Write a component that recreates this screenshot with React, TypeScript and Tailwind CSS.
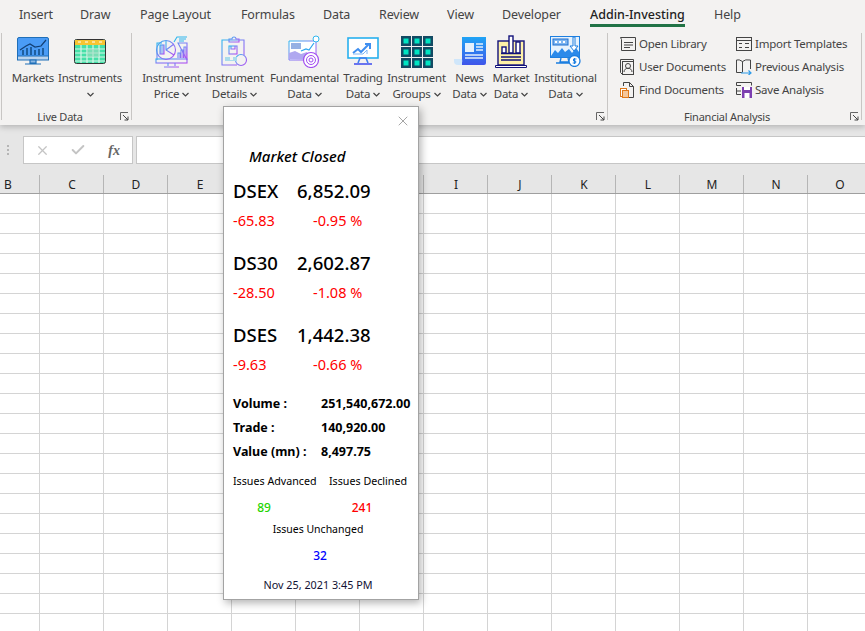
import React from 'react';
import { X, Check } from 'lucide-react';

const tabs = [
    { label: 'Insert', left: 19 },
    { label: 'Draw', left: 80 },
    { label: 'Page Layout', left: 140 },
    { label: 'Formulas', left: 241 },
    { label: 'Data', left: 323 },
    { label: 'Review', left: 379 },
    { label: 'View', left: 447 },
    { label: 'Developer', left: 502 },
    { label: 'Addin-Investing', left: 590, active: true },
    { label: 'Help', left: 714 },
];

const columns = ['B', 'C', 'D', 'E', 'F', 'G', 'H', 'I', 'J', 'K', 'L', 'M', 'N', 'O'];
const rows = Array.from({ length: 22 }, (_, i) => i);

function Chevron() {
    return (
        <svg width="7" height="5" viewBox="0 0 7 5" className="inline-block ml-[3px] mb-[1px]">
            <path d="M0.5 1 L3.5 4 L6.5 1" fill="none" stroke="#444" strokeWidth="1.2" />
        </svg>
    );
}

function Launcher() {
    return (
        <svg width="9" height="9" viewBox="0 0 9 9">
            <path d="M0.5 8V0.5H8" fill="none" stroke="#666" />
            <path d="M3 3L8 8M8 4.5V8H4.5" fill="none" stroke="#444" />
        </svg>
    );
}

function Grad({ id }: { id: string }) {
    return (
        <defs>
            <linearGradient id={id} x1="0" y1="0" x2="1" y2="1">
                <stop offset="0" stopColor="#2fb6ee" />
                <stop offset="0.5" stopColor="#7d7cf5" />
                <stop offset="1" stopColor="#b04df0" />
            </linearGradient>
        </defs>
    );
}

function MarketsIcon() {
    return (
        <svg width="32" height="29" viewBox="0 0 32 29">
            <rect x="0.5" y="0.5" width="31" height="22" rx="1.5" fill="#4a9cf6" stroke="#1f6fb8" />
            <rect x="0.5" y="19" width="31" height="4" fill="#b9d3ee" stroke="#1f6fb8" />
            <path d="M3 13L9 9L13 7L18 10L24 9L29 3" fill="none" stroke="#123f73" strokeWidth="1.2" />
            <path d="M6 18v-5M10 18v-7M14 18v-8M18 18v-5M22 18v-6M26 18v-7" stroke="#1f5f9f" strokeWidth="2" />
            <path d="M13 23h6v3h-6zM8 27h16" fill="#8bb8e4" stroke="#1f6fb8" strokeWidth="1.2" />
        </svg>
    );
}

function InstrumentsIcon() {
    return (
        <svg width="32" height="25" viewBox="0 0 32 25">
            <rect x="0.5" y="0.5" width="31" height="24" rx="2" fill="#45e0a8" stroke="#333" />
            <rect x="1" y="1" width="30" height="5" fill="#f7c532" />
            <path d="M4 3h3M11 3h3M18 3h3M25 3h3" stroke="#fff" />
            <path d="M1 10h30M1 14h30M1 18h30M1 22h30M7 6v18M13 6v18M19 6v18M25 6v18" stroke="#d7f5e8" strokeWidth="1.2" />
            <rect x="13" y="10" width="12" height="8" fill="#9fdcc0" opacity="0.6" />
        </svg>
    );
}

function PriceIcon() {
    return (
        <svg width="33" height="33" viewBox="0 0 33 33" fill="none">
            <Grad id="gp" />
            <g stroke="url(#gp)" strokeWidth="1.1">
                <path d="M2 25V8h5M23 8h9v17z" />
                <rect x="1" y="24" width="31" height="4" />
                <path d="M13 28v3M20 28v3M9 32h15" />
                <circle cx="11" cy="15" r="9.5" />
                <path d="M11 6v9l8 5M11 15l8-6" />
                <rect x="5" y="10" width="4" height="9" fill="#a9c4f2" />
                <path d="M23 23v-5h2v5M26 23v-8h2v8M29 23V12h2v11" />
                <path d="M19 7l3-5h10M24 4h7M24 6h5" stroke="#2fb6ee" />
            </g>
        </svg>
    );
}

function DetailsIcon() {
    return (
        <svg width="27" height="31" viewBox="0 0 27 31" fill="none">
            <Grad id="gd" />
            <g stroke="url(#gd)" strokeWidth="1.1">
                <path d="M16 29H1V4h22v15" />
                <path d="M8 6V3h3a2 2 0 0 1 4 0h3v3z" />
                <rect x="8" y="10" width="8" height="8" />
                <path d="M10 10v3h4v-3" />
                <circle cx="20" cy="24" r="5.5" />
                <path d="M20 21v1M20 23.5v4" />
            </g>
            <path d="M4 21h5v3h3v-3h4v4H4z" fill="#a9dcec" />
        </svg>
    );
}

function FundamentalIcon() {
    return (
        <svg width="33" height="33" viewBox="0 0 33 33" fill="none">
            <Grad id="gf" />
            <path d="M1 6h27v19H1z" fill="#fff" stroke="url(#gf)" />
            <path d="M1 24V18l6-2 6 3 6-2 2 8z" fill="#b0a8f0" />
            <path d="M3 9h10M3 11h10M3 13h10" stroke="#2d63c8" />
            <path d="M13 16l5-2 3 1 5-7" stroke="#2fa6ee" strokeWidth="1.2" />
            <circle cx="28" cy="4" r="3" fill="#fff" stroke="#2fb6ee" />
            <circle cx="23" cy="25" r="7.5" fill="#fff" stroke="#a14df0" strokeWidth="1.2" />
            <circle cx="23" cy="25" r="4.5" stroke="#a14df0" />
            <circle cx="23" cy="25" r="2" stroke="#a14df0" />
        </svg>
    );
}

function TradingIcon() {
    return (
        <svg width="32" height="29" viewBox="0 0 32 29" fill="none">
            <rect x="1" y="1" width="30" height="20" fill="#fff" stroke="#27b0ee" strokeWidth="1.6" />
            <path d="M6 16l5-4 3 3 8-8" stroke="#3f8ff0" strokeWidth="2" />
            <path d="M18 7h5v5" stroke="#3f8ff0" strokeWidth="2" />
            <path d="M6 17h10l4-4v4" stroke="#7fb6f5" strokeWidth="1" />
            <path d="M11 26l2-5h6l2 5" stroke="#3f7ff0" strokeWidth="1.6" />
            <path d="M7 27h18" stroke="#5a66f0" strokeWidth="1.8" />
        </svg>
    );
}

function GroupsIcon() {
    const cells = [0, 11, 22];
    return (
        <svg width="32" height="32" viewBox="0 0 32 32">
            {cells.map(y =>
                cells.map(x => (
                    <g key={`${x}-${y}`}>
                        <rect x={x} y={y} width="10" height="10" fill="#134a63" />
                        <rect x={x + 2.5} y={y + 2.5} width="5" height="5" fill="#00e6c3" />
                    </g>
                ))
            )}
        </svg>
    );
}

function NewsIcon() {
    return (
        <svg width="32" height="29" viewBox="0 0 32 29">
            <defs>
                <linearGradient id="gn" x1="0" y1="0" x2="0" y2="1">
                    <stop offset="0" stopColor="#1fa4f5" />
                    <stop offset="1" stopColor="#3f55ea" />
                </linearGradient>
            </defs>
            <path d="M8 0H32V26Q32 28 30 28H6Q9 27 8 22z" fill="url(#gn)" />
            <path d="M0 22H8V28H4Q0 28 0 24z" fill="#cfe6fa" />
            <rect x="11" y="6" width="9" height="9" fill="#e4f0fc" />
            <path d="M22 7h7M22 10h7M22 13h7M11 18h18M11 21h18" stroke="#e4f0fc" strokeWidth="1.3" />
        </svg>
    );
}

function MarketDataIcon() {
    return (
        <svg width="32" height="33" viewBox="0 0 32 33" fill="none">
            <rect x="3" y="6" width="26" height="24" fill="#fff2a8" stroke="#12127a" strokeWidth="1.4" />
            <rect x="7" y="12" width="4" height="6" fill="#fff" stroke="#12127a" strokeWidth="1.4" />
            <rect x="14" y="1" width="4" height="17" fill="#fff" stroke="#12127a" strokeWidth="1.4" />
            <rect x="21" y="7" width="4" height="11" fill="#fff" stroke="#12127a" strokeWidth="1.4" />
            <path d="M6 18.5h20M6 22h20M6 25h20" stroke="#12127a" strokeWidth="1.3" />
            <path d="M0.5 30.5h31v2h-31z" fill="#fff" stroke="#12127a" />
        </svg>
    );
}

function InstitutionalIcon() {
    return (
        <svg width="31" height="31" viewBox="0 0 31 31" fill="none">
            <rect x="0.5" y="0.5" width="29" height="21" fill="#e6f2fd" stroke="#1d7fe0" />
            <rect x="3" y="3" width="15" height="6" fill="#7fb6f0" stroke="#1d6fd0" />
            <path d="M6 5v2M10 5v2M14 5v2" stroke="#fff" strokeWidth="2" />
            <path d="M1 20l4-6 3 3 4-5 3 4 4-3 3 4 4-5 3 4v5H1z" fill="#2b8aea" />
            <path d="M23 1v9h-3l4 5 4-5h-3V1z" fill="#fff" stroke="#1d7fe0" />
            <path d="M11 22l-1 4h9l-1-4M6 27h15" stroke="#1d7fe0" strokeWidth="1.4" />
            <circle cx="24.5" cy="25" r="5.5" fill="#fff" stroke="#1d7fe0" strokeWidth="1.3" />
            <path d="M26.5 23h-3v2h2.2v2h-3M24.5 22v6" stroke="#1d7fe0" />
        </svg>
    );
}

function OpenLibraryIcon() {
    return (
        <svg width="16" height="14" viewBox="0 0 16 14" fill="none" stroke="#444">
            <path d="M0.5 0.5H15.5M0.5 0.5L1.5 2.5M1.5 2.5V13.5H15.5V0.5" />
            <path d="M4 5.5h9M4 8h9M4 10.5h6" />
        </svg>
    );
}

function UserDocsIcon() {
    return (
        <svg width="14" height="16" viewBox="0 0 14 16" fill="none" stroke="#444">
            <path d="M0.5 0.5H13.5V15.5H2.5L0.5 13.5z" />
            <rect x="2.5" y="2.5" width="11" height="13" />
            <circle cx="8" cy="7" r="2.5" />
            <path d="M4 13c0-5 8-5 8 0" />
        </svg>
    );
}

function FindDocsIcon() {
    return (
        <svg width="14" height="16" viewBox="0 0 14 16" fill="none">
            <path d="M3.5 4V0.5H9.5L13.5 4.5V15.5H9M9.5 0.5V4.5H13.5" stroke="#444" />
            <rect x="0.5" y="6.5" width="6" height="8" fill="#fff" stroke="#e0791a" />
            <rect x="2.5" y="8.5" width="6" height="7" fill="#f6c79a" stroke="#e0791a" />
        </svg>
    );
}

function ImportIcon() {
    return (
        <svg width="16" height="14" viewBox="0 0 16 14" fill="none" stroke="#444">
            <rect x="0.5" y="0.5" width="15" height="13" />
            <path d="M0.5 3.5H15.5M3 6.5h3M9 6.5h4M3 10.5h3M9 10.5h4" />
        </svg>
    );
}

function PreviousIcon() {
    return (
        <svg width="16" height="16" viewBox="0 0 16 16" fill="none">
            <path d="M6.5 2.5Q3 0 0.5 1V13.5H6.5M6.5 2.5V13M6.5 2.5Q9 0 14.5 1V10" stroke="#444" />
            <path d="M5 14h10M12.5 11.5L15 14L12.5 16" stroke="#2d9bea" strokeWidth="1.2" />
        </svg>
    );
}

function SaveIcon() {
    return (
        <svg width="16" height="16" viewBox="0 0 16 16" fill="none">
            <path d="M0.5 3.5V0.5H15.5V3.5M0.5 3.5H5M0.5 6V12.5H5M0.5 9H5" stroke="#444" />
            <rect x="6" y="5" width="10" height="11" fill="#7d3fb0" />
            <rect x="8" y="5" width="6" height="3" fill="#fff" />
            <rect x="8.5" y="11" width="5" height="5" fill="#fff" />
        </svg>
    );
}

const liveButtons = [
    { icon: <MarketsIcon />, top: 'Markets', width: 52, chevronOnly: false },
    { icon: <InstrumentsIcon />, top: 'Instruments', width: 62, chevronOnly: true },
];

const dataButtons = [
    { icon: <PriceIcon />, top: 'Instrument', bottom: 'Price', width: 63 },
    { icon: <DetailsIcon />, top: 'Instrument', bottom: 'Details', width: 63 },
    { icon: <FundamentalIcon />, top: 'Fundamental', bottom: 'Data', width: 77 },
    { icon: <TradingIcon />, top: 'Trading', bottom: 'Data', width: 40 },
    { icon: <GroupsIcon />, top: 'Instrument', bottom: 'Groups', width: 67 },
    { icon: <NewsIcon />, top: 'News', bottom: 'Data', width: 39 },
    { icon: <MarketDataIcon />, top: 'Market', bottom: 'Data', width: 44 },
    { icon: <InstitutionalIcon />, top: 'Institutional', bottom: 'Data', width: 65 },
];

const docColumns = [
    [
        { icon: <OpenLibraryIcon />, label: 'Open Library' },
        { icon: <UserDocsIcon />, label: 'User Documents' },
        { icon: <FindDocsIcon />, label: 'Find Documents' },
    ],
    [
        { icon: <ImportIcon />, label: 'Import Templates' },
        { icon: <PreviousIcon />, label: 'Previous Analysis' },
        { icon: <SaveIcon />, label: 'Save Analysis' },
    ],
];

const indices = [
    { name: 'DSEX', value: '6,852.09', change: '-65.83', pct: '-0.95 %' },
    { name: 'DS30', value: '2,602.87', change: '-28.50', pct: '-1.08 %' },
    { name: 'DSES', value: '1,442.38', change: '-9.63', pct: '-0.66 %' },
];

const stats = [
    { label: 'Volume :', value: '251,540,672.00' },
    { label: 'Trade :', value: '140,920.00' },
    { label: 'Value (mn) :', value: '8,497.75' },
];

function Ribbon() {
    return (
        <div className="relative z-10 h-[125px] bg-[#f3f2f1] shadow-[0_2px_6px_rgba(0,0,0,0.22)]">
            {/* tabs */}
            <div className="relative h-[33px] text-[12.5px] tracking-[-0.01em] text-[#444]">
                {tabs.map(tab => (
                    <span
                        key={tab.label}
                        style={{ left: tab.left }}
                        className={`absolute top-[5px] leading-[20px] whitespace-nowrap ${tab.active ? 'font-medium tracking-normal text-[#222] border-b-[3px] border-[#217346] h-[22px]' : ''}`}
                    >
                        {tab.label}
                    </span>
                ))}
            </div>

            <div className="flex h-[87px] text-[11.5px] tracking-[-0.02em] text-[#444] leading-[16px]">
                {/* live data */}
                <div className="relative ml-[1px] w-[131px] h-[87px] border-x border-[#c8c6c4] flex flex-col">
                    <div className="flex pl-[5px] pt-[2px]">
                        {liveButtons.map(b => (
                            <div key={b.top} style={{ width: b.width }} className="flex flex-col items-center">
                                <div className="h-[33px] flex items-center justify-center">{b.icon}</div>
                                <span className="mt-[2px] whitespace-nowrap">{b.top}</span>
                                {b.chevronOnly && <span className="leading-[16px] -ml-[3px]"><Chevron /></span>}
                            </div>
                        ))}
                    </div>
                    <div className="absolute -bottom-[5px] left-0 w-[116px] text-center text-[11px]">Live Data</div>
                    <div className="absolute right-[2px] -bottom-[1px]"><Launcher /></div>
                </div>

                {/* data */}
                <div className="relative w-[476px] h-[87px] border-r border-[#c8c6c4]">
                    <div className="flex pl-[8px] pt-[2px]">
                        {dataButtons.map(b => (
                            <div key={b.top + b.bottom} style={{ width: b.width }} className="flex flex-col items-center">
                                <div className="h-[33px] flex items-center justify-center">{b.icon}</div>
                                <span className="mt-[2px] whitespace-nowrap">{b.top}</span>
                                <span className="whitespace-nowrap">{b.bottom}<Chevron /></span>
                            </div>
                        ))}
                    </div>
                    <div className="absolute right-[2px] -bottom-[1px]"><Launcher /></div>
                </div>

                {/* financial analysis */}
                <div className="relative w-[254px] h-[87px] border-r border-[#c8c6c4]">
                    <div className="flex pl-[12px] -mt-[1px]">
                        {docColumns.map((col, i) => (
                            <div key={i} className="flex flex-col w-[116px]">
                                {col.map(item => (
                                    <div key={item.label} className="flex items-center h-[23px] whitespace-nowrap">
                                        <span className="w-[19px] flex items-center justify-start">{item.icon}</span>
                                        {item.label}
                                    </div>
                                ))}
                            </div>
                        ))}
                    </div>
                    <div className="absolute -bottom-[5px] left-0 w-[238px] text-center text-[11px]">Financial Analysis</div>
                    <div className="absolute right-[2px] -bottom-[1px]"><Launcher /></div>
                </div>
            </div>
        </div>
    );
}

function FormulaBar() {
    return (
        <div className="h-[39px] bg-[#e6e6e6] flex pt-[11px]">
            <div className="w-[23px] flex flex-col items-center justify-center gap-[2px] pb-[1px] -ml-[4px]">
                <span className="w-[2px] h-[2px] bg-[#b5b5b5]" />
                <span className="w-[2px] h-[2px] bg-[#b5b5b5]" />
                <span className="w-[2px] h-[2px] bg-[#b5b5b5]" />
            </div>
            <div className="ml-[4px] w-[110px] h-[28px] bg-white border border-[#c6c6c6] flex items-center text-[#c4c4c4]">
                <span className="w-[37px] flex justify-center"><X size={15} strokeWidth={2} /></span>
                <span className="w-[36px] flex justify-center"><Check size={16} strokeWidth={3} /></span>
                <span className="w-[36px] text-center text-[#666] italic font-['Liberation_Serif',serif] text-[14px] font-bold">fx</span>
            </div>
            <div className="ml-[3px] flex-1 h-[28px] bg-white border border-[#c6c6c6] border-r-0" />
        </div>
    );
}

function Sheet() {
    return (
        <div className="overflow-hidden">
            <div className="flex h-[30px] pt-[11px] bg-[#e6e6e6] border-b border-[#9f9f9f] -ml-[24px] w-[960px]">
                {columns.map(c => (
                    <div key={c} className="w-[64px] shrink-0 pl-[1px] border-r border-[#b5b5b5] text-center text-[12px] leading-[20px] text-[#222]">
                        {c}
                    </div>
                ))}
            </div>
            {rows.map(r => (
                <div key={r} className="flex h-[20px] -ml-[24px] w-[960px]">
                    {columns.map(c => (
                        <div key={c} className="w-[64px] shrink-0 bg-white border-r border-b border-[#d4d4d4]" />
                    ))}
                </div>
            ))}
        </div>
    );
}

function MarketPopup() {
    return (
        <div className="absolute left-[223px] top-[106px] z-20 w-[196px] h-[494px] bg-white border border-[#a3a3a3] shadow-[2px_3px_8px_rgba(0,0,0,0.3)] text-black">
            <X size={16} strokeWidth={1} className="absolute right-[7px] top-[6px] text-[#777]" />

            <div className="pt-[39px] pl-[25px] italic font-medium text-[15px] leading-[20px]">Market Closed</div>

            <div className="mt-[12px] pl-[9px] flex flex-col gap-[20px]">
                {indices.map(idx => (
                    <div key={idx.name}>
                        <div className="flex h-[26px] text-[18.5px] leading-[26px] font-medium">
                            <span className="w-[64px]">{idx.name}</span>
                            <span>{idx.value}</span>
                        </div>
                        <div className="flex mt-[6px] h-[20px] text-[14.5px] leading-[20px] text-[#ff0000]">
                            <span className="w-[80px]">{idx.change}</span>
                            <span>{idx.pct}</span>
                        </div>
                    </div>
                ))}
            </div>

            <div className="mt-[18px] pl-[9px]">
                {stats.map(s => (
                    <div key={s.label} className="flex h-[24px] text-[12.5px] leading-[24px] font-bold whitespace-nowrap">
                        <span className="w-[88px]">{s.label}</span>
                        <span>{s.value}</span>
                    </div>
                ))}
            </div>

            <div className="mt-[8px] pl-[9px] flex h-[18px] text-[10.7px] leading-[18px] whitespace-nowrap">
                <span className="w-[96px]">Issues Advanced</span>
                <span>Issues Declined</span>
            </div>
            <div className="mt-[9px] flex h-[18px] text-[12px] leading-[18px] font-medium">
                <span className="w-[80px] text-center text-[#1fd400]">89</span>
                <span className="ml-[38px] w-[40px] text-center text-[#ff0000]">241</span>
            </div>
            <div className="mt-[3px] h-[18px] text-center text-[10.5px] leading-[18px] pr-[6px]">Issues Unchanged</div>
            <div className="mt-[9px] h-[18px] text-center text-[12px] leading-[18px] font-medium text-[#0000ff] pr-[2px]">32</div>
            <div className="mt-[12px] h-[16px] text-center text-[10.8px] leading-[16px] text-[#111133] pr-[6px]">Nov 25, 2021 3:45 PM</div>
        </div>
    );
}

export default function App() {
    return (
        <div className="relative w-[865px] h-[631px] overflow-hidden bg-white font-['Noto_Sans',sans-serif]">
            <Ribbon />
            <FormulaBar />
            <Sheet />
            <MarketPopup />
        </div>
    );
}
